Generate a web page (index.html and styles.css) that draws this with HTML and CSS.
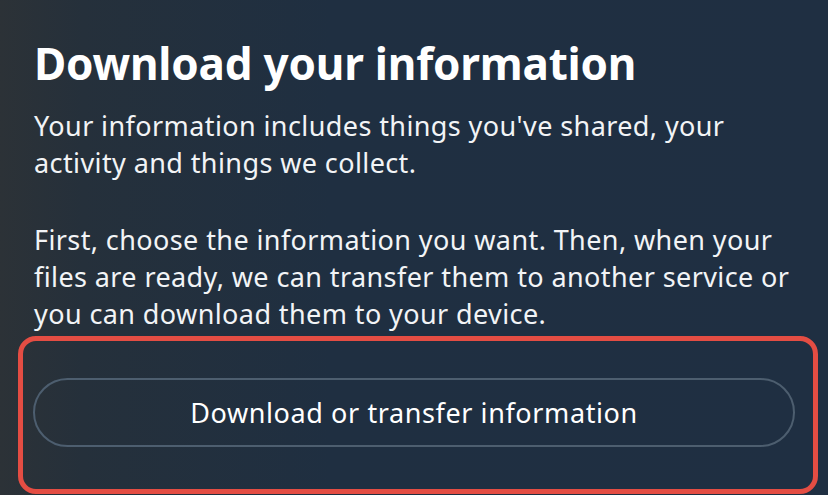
FILE: index.html
```html
<!DOCTYPE html>
<html>
<head>
<meta charset="utf-8">
<link rel="stylesheet" href="styles.css">
</head>
<body>
<main class="page">
  <h1 class="title">Download your information</h1>
  <p class="text">Your information includes things you've shared, your activity and things we collect.</p>
  <p class="text">First, choose the information you want. Then, when your files are ready, we can transfer them to another service or you can download them to your device.</p>
  <div class="highlight">
    <button class="pill">Download or transfer information</button>
  </div>
</main>
</body>
</html>
```
FILE: styles.css
```css
html, body {
  margin: 0;
  padding: 0;
}
body {
  width: 828px;
  height: 495px;
  overflow: hidden;
  background: linear-gradient(90deg, #2c3237 0%, #25303b 10%, #1f2f41 40%, #1f2f42 100%);
  font-family: "Noto Sans", sans-serif;
  color: #ffffff;
}
.page {
  padding: 33px 0 0 34px;
}
.title {
  margin: 0;
  font-size: 44px;
  font-weight: 700;
  line-height: 60px;
  letter-spacing: -0.2px;
}
.text {
  margin: 14px 28px 40px 0;
  font-size: 27px;
  line-height: 37px;
  letter-spacing: 0.4px;
  color: #f2f4f6;
}
.text + .text {
  margin-top: 0;
  margin-bottom: 0;
}
.highlight {
  margin: 4px 0 0 -16px;
  width: 800px;
  height: 158px;
  border: 5px solid #e44d43;
  border-radius: 18px;
  box-sizing: border-box;
  padding: 37px 18px 0 10px;
}
.pill {
  display: block;
  width: 100%;
  height: 69px;
  border: 2px solid #4d5e6f;
  border-radius: 35px;
  background: transparent;
  color: #ffffff;
  font-family: "Noto Sans", sans-serif;
  font-size: 27px;
  font-weight: 400;
  letter-spacing: 0.6px;
}
```
